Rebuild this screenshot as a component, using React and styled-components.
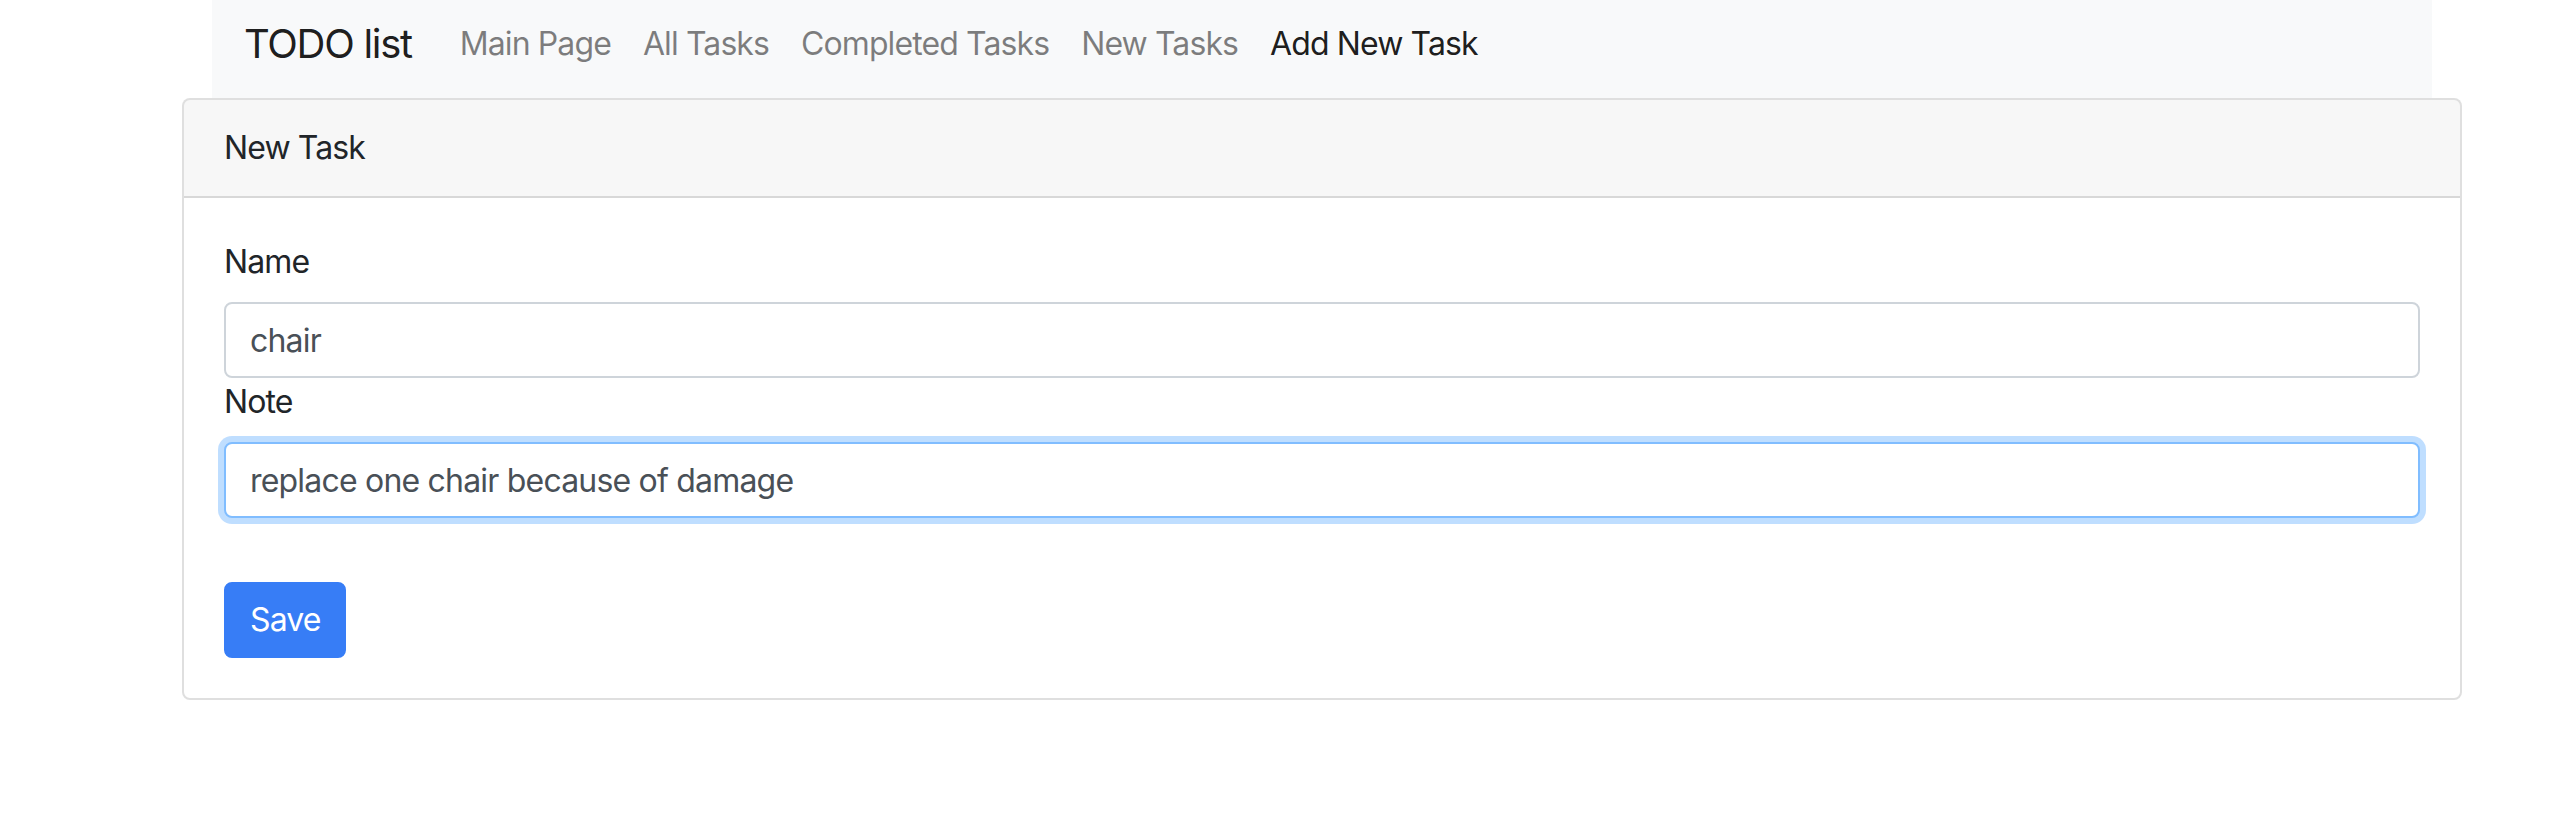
import { useState } from "react";
import { styled, createGlobalStyle } from "styled-components";

const GlobalStyle = createGlobalStyle`
    body {
        margin: 0;
        background: #ffffff;
        font-family: Inter, "Liberation Sans", sans-serif;
        color: #212529;
    }
    * { box-sizing: border-box; }
`;

export default function App() {
    const [name, setName] = useState('chair');
    const [note, setNote] = useState('replace one chair because of damage');
    const links = ['Main Page', 'All Tasks', 'Completed Tasks', 'New Tasks', 'Add New Task'];

    function save(e) {
        e.preventDefault();
    }

    return (
        <>
            <GlobalStyle />
            <Container>
                <Navbar>
                    <Brand>TODO list</Brand>
                    <NavList>
                        {links.map((l) => (
                            <NavLink key={l} $active={l === 'Add New Task'}>{l}</NavLink>
                        ))}
                    </NavList>
                </Navbar>
                <Card>
                    <CardHeader>New Task</CardHeader>
                    <CardBody onSubmit={save}>
                        <Label>Name</Label>
                        <Input type="text" value={name} onChange={(e) => setName(e.target.value)} />
                        <Label>Note</Label>
                        <Input type="text" $focused value={note} onChange={(e) => setNote(e.target.value)} autoFocus />
                        <SaveButton type="submit">Save</SaveButton>
                    </CardBody>
                </Card>
            </Container>
        </>
    )
}

export const Container = styled.div`
    margin-left: 182px;
    width: 2280px;
`;

export const Navbar = styled.nav`
    margin: 0 30px;
    height: 98px;
    padding: 14px 32px 0;
    background-color: #f8f9fa;
    display: flex;
    align-items: flex-start;
`;

export const Brand = styled.a`
    font-size: 40px;
    line-height: 60px;
    color: rgba(0, 0, 0, 0.9);
    margin-right: 32px;
    letter-spacing: -1.3px;
`;

export const NavList = styled.div`
    display: flex;
    align-items: center;
    height: 60px;
`;

export const NavLink = styled.a`
    font-size: 32px;
    line-height: 48px;
    padding: 0 16px;
    letter-spacing: -0.9px;
    color: ${(p) => (p.$active ? 'rgba(0, 0, 0, 0.9)' : 'rgba(0, 0, 0, 0.5)')};
    cursor: pointer;
`;

export const Card = styled.div`
    border: 2px solid rgba(0, 0, 0, 0.125);
    border-radius: 8px;
    background: #fff;
    overflow: hidden;
`;

export const CardHeader = styled.div`
    padding: 24px 40px;
    background-color: rgba(0, 0, 0, 0.03);
    border-bottom: 2px solid rgba(0, 0, 0, 0.125);
    font-size: 32px;
    line-height: 48px;
    letter-spacing: -0.9px;
`;

export const CardBody = styled.form`
    padding: 40px;
    display: flex;
    flex-direction: column;
    align-items: flex-start;
`;

export const Label = styled.label`
    display: block;
    font-size: 32px;
    line-height: 48px;
    margin-bottom: 16px;
    letter-spacing: -0.9px;
`;

export const Input = styled.input`
    width: 100%;
    height: 76px;
    padding: 12px 24px;
    font-family: inherit;
    font-size: 32px;
    letter-spacing: -0.8px;
    color: #495057;
    background: #fff;
    border: 2px solid ${(p) => (p.$focused ? '#80bdff' : '#ced4da')};
    border-radius: 8px;
    outline: none;
    caret-color: #212529;
    box-shadow: ${(p) => (p.$focused ? '0 0 0 6px rgba(0, 123, 255, 0.25)' : 'none')};
`;

export const SaveButton = styled.button`
    margin-top: 64px;
    height: 76px;
    padding: 12px 24px;
    font-family: inherit;
    font-size: 32px;
    line-height: 48px;
    letter-spacing: -0.9px;
    color: #fff;
    background-color: #377df6;
    border: 2px solid #377df6;
    border-radius: 8px;
    cursor: pointer;
`;
